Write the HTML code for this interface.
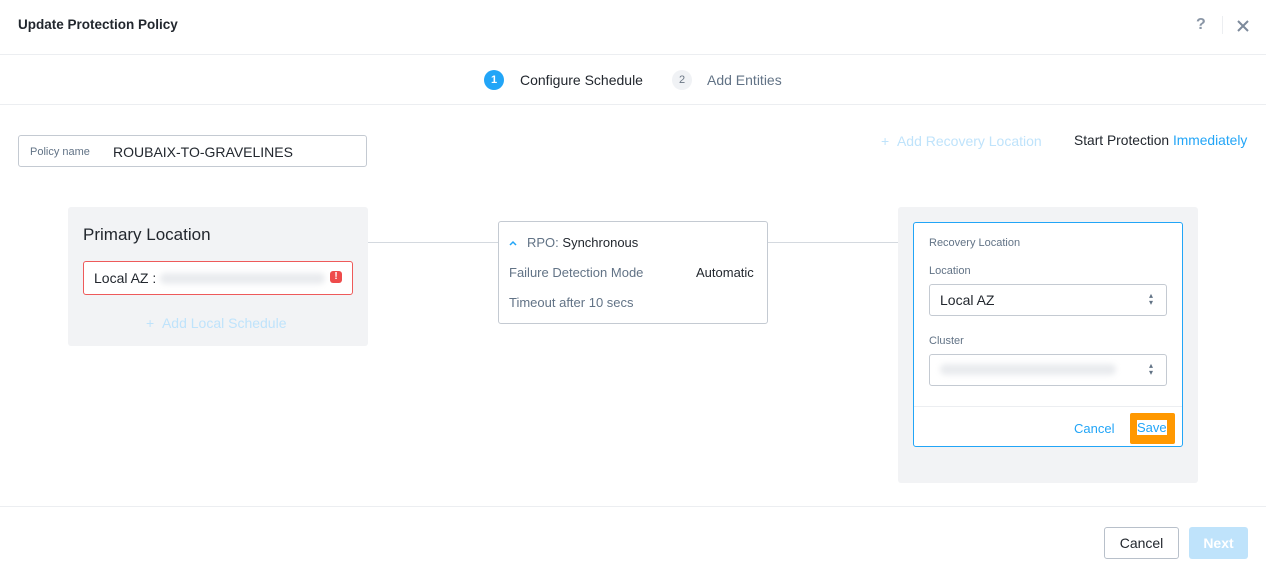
<!DOCTYPE html>
<html><head><style>
*{box-sizing:border-box;margin:0;padding:0}
body{width:1266px;height:570px;background:#fff;font-family:"Liberation Sans",sans-serif;position:relative;overflow:hidden;color:#22272e}
.a{position:absolute}
.hl{position:absolute;left:0;width:1266px;height:1px;background:#eceef1}
.blur{position:absolute;background:#e9ebee;filter:blur(3px);height:11px;border-radius:5px}
</style></head><body>
<div class="a" style="left:18px;top:17px;font-size:13.5px;font-weight:bold;color:#22272e">Update Protection Policy</div>
<div class="a" style="left:1196px;top:16px;font-size:16px;color:#8a96a6;font-weight:bold">?</div>
<div class="a" style="left:1222px;top:16px;width:1px;height:18px;background:#eceef1"></div>
<svg class="a" style="left:1237px;top:20px" width="12" height="12"><path d="M1 1L11 11M11 1L1 11" stroke="#7d8a9b" stroke-width="2"/></svg>
<div class="hl" style="top:54px"></div>
<div class="a" style="left:484px;top:70px;width:20px;height:20px;border-radius:50%;background:#22a5f7;color:#fff;font-size:11px;font-weight:bold;text-align:center;line-height:20px">1</div>
<div class="a" style="left:520px;top:72px;font-size:14px;color:#22272e">Configure Schedule</div>
<div class="a" style="left:672px;top:70px;width:20px;height:20px;border-radius:50%;background:#f0f2f5;color:#6b7785;font-size:11px;text-align:center;line-height:20px">2</div>
<div class="a" style="left:707px;top:72px;font-size:14px;color:#627386">Add Entities</div>
<div class="hl" style="top:104px"></div>
<div class="a" style="left:18px;top:135px;width:349px;height:32px;border:1px solid #c4cad2;border-radius:3px"></div>
<div class="a" style="left:30px;top:146px;font-size:11px;color:#627386">Policy name</div>
<div class="a" style="left:113px;top:144px;font-size:14px;color:#22272e">ROUBAIX-TO-GRAVELINES</div>
<div class="a" style="left:881px;top:133px;font-size:14px;color:#bfe3fb">+ &nbsp;Add Recovery Location</div>
<div class="a" style="left:1074px;top:133px;font-size:13.8px;color:#22272e">Start Protection <span style="color:#22a5f7">Immediately</span></div>
<div class="a" style="left:368px;top:242px;width:130px;height:1px;background:#d4d9df"></div>
<div class="a" style="left:768px;top:242px;width:130px;height:1px;background:#d4d9df"></div>
<div class="a" style="left:68px;top:207px;width:300px;height:139px;background:#f2f3f5;border-radius:3px"></div>
<div class="a" style="left:83px;top:225px;font-size:17px;color:#22272e">Primary Location</div>
<div class="a" style="left:83px;top:261px;width:270px;height:34px;background:#fff;border:1px solid #ee5a5a;border-radius:3px"></div>
<div class="a" style="left:94px;top:270px;font-size:14px;color:#22272e">Local AZ :</div>
<div class="blur" style="left:160px;top:273px;width:165px"></div>
<div class="a" style="left:330px;top:271px;width:12px;height:12px;background:#ee4b4b;border-radius:3px;color:#fff;font-size:10px;font-weight:bold;text-align:center;line-height:12px">!</div>
<div class="a" style="left:146px;top:315px;font-size:14px;color:#bfe3fb">+ &nbsp;Add Local Schedule</div>
<div class="a" style="left:498px;top:221px;width:270px;height:103px;border:1px solid #c4cad2;border-radius:3px;background:#fff"></div>
<svg class="a" style="left:509px;top:240px" width="8" height="6"><path d="M1 5L4 2L7 5" stroke="#22a5f7" stroke-width="1.5" fill="none"/></svg>
<div class="a" style="left:527px;top:235px;font-size:13px;color:#627386">RPO: <span style="color:#22272e">Synchronous</span></div>
<div class="a" style="left:509px;top:265px;font-size:13px;color:#627386">Failure Detection Mode</div>
<div class="a" style="left:696px;top:265px;font-size:13px;color:#22272e">Automatic</div>
<div class="a" style="left:509px;top:295px;font-size:13px;color:#627386">Timeout after 10 secs</div>
<div class="a" style="left:898px;top:207px;width:300px;height:276px;background:#f2f3f5;border-radius:3px"></div>
<div class="a" style="left:913px;top:222px;width:270px;height:225px;background:#fff;border:1px solid #22a5f7;border-radius:3px"></div>
<div class="a" style="left:929px;top:237px;font-size:11px;color:#627386">Recovery Location</div>
<div class="a" style="left:929px;top:265px;font-size:11px;color:#627386">Location</div>
<div class="a" style="left:929px;top:284px;width:238px;height:32px;border:1px solid #c4cad2;border-radius:3px"></div>
<div class="a" style="left:940px;top:292px;font-size:14px;color:#22272e">Local AZ</div>
<div class="a" style="left:1149px;top:292px;font-size:8px;color:#627386;line-height:7px">▴<br>▾</div>
<div class="a" style="left:929px;top:335px;font-size:11px;color:#627386">Cluster</div>
<div class="a" style="left:929px;top:354px;width:238px;height:32px;border:1px solid #c4cad2;border-radius:3px"></div>
<div class="blur" style="left:940px;top:364px;width:176px"></div>
<div class="a" style="left:1149px;top:362px;font-size:8px;color:#627386;line-height:7px">▴<br>▾</div>
<div class="a" style="left:914px;top:406px;width:268px;height:1px;background:#eceef1"></div>
<div class="a" style="left:1074px;top:421px;font-size:13px;color:#22a5f7">Cancel</div>
<div class="a" style="left:1130px;top:413px;width:45px;height:31px;background:#ff9800;border-radius:2px"></div>
<div class="a" style="left:1137px;top:420px;font-size:13px;color:#22a5f7;background:#fff;line-height:15px">Save</div>
<div class="hl" style="top:506px"></div>
<div class="a" style="left:1104px;top:527px;width:75px;height:32px;border:1px solid #b8c0ca;border-radius:3px;font-size:14px;text-align:center;line-height:30px;color:#22272e">Cancel</div>
<div class="a" style="left:1189px;top:527px;width:59px;height:32px;background:#bfe3fb;border-radius:3px;font-size:14px;font-weight:bold;text-align:center;line-height:32px;color:#fff">Next</div>
</body></html>
